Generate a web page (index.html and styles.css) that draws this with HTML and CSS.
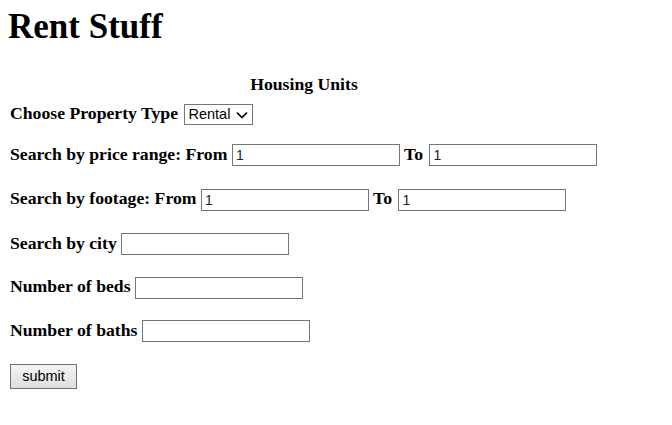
FILE: index.html
```html
<!DOCTYPE html>
<html>
<head>
<meta charset="utf-8">
<title>Rent Stuff</title>
<link rel="stylesheet" href="styles.css">
</head>
<body>
<h1 class="title">Rent Stuff</h1>
<form class="search">
  <div class="caption">Housing Units</div>
  <div class="row row-type">Choose Property Type <span class="select-wrap"><select class="select"><option>Rental</option></select><svg class="chev" width="12" height="8" viewBox="0 0 12 8"><path d="M1 1.5 L6 6.5 L11 1.5" fill="none" stroke="#000" stroke-width="1.6"/></svg></span></div>
  <div class="row row-price">Search by price range: From <input class="field" type="text" value="1"> To <input class="field field-to" type="text" value="1"></div>
  <div class="row row-wide">Search by footage: From <input class="field" type="text" value="1"> To <input class="field field-to" type="text" value="1"></div>
  <div class="row row-wide">Search by city <input class="field" type="text"></div>
  <div class="row">Number of beds <input class="field" type="text"></div>
  <div class="row">Number of baths <input class="field" type="text"></div>
  <div class="row row-submit"><button class="btn" type="button">submit</button></div>
</form>
</body>
</html>
```
FILE: styles.css
```css
html, body {
  background: #fff;
}
body {
  margin: 8px;
  font-family: "Liberation Serif", "Times New Roman", serif;
  color: #000;
}
.title {
  margin: 0;
  font-size: 35px;
  font-weight: bold;
  line-height: 37px;
}
.search {
  width: 588px;
  padding-left: 2px;
  margin-top: 30px;
  display: flex;
  flex-direction: column;
}
.caption {
  text-align: center;
  font-weight: bold;
  font-size: 17.7px;
  line-height: 18px;
  height: 18px;
}
.row {
  font-weight: bold;
  font-size: 17.7px;
  height: 24px;
  line-height: 24px;
  margin-top: 19.5px;
  white-space: nowrap;
}
.row-type {
  margin-top: 7.5px;
}
.row-price {
  margin-top: 17px;
}
.row-wide {
  margin-top: 20.5px;
}
.row-submit {
  margin-top: 22px;
  height: 26px;
}
.field {
  box-sizing: border-box;
  width: 168px;
  height: 22px;
  border: 1px solid #767676;
  padding: 0 3px;
  font-family: "Liberation Sans", Arial, sans-serif;
  font-size: 14px;
  color: #222;
  background: #fff;
  vertical-align: middle;
  margin: 0;
  border-radius: 0;
  outline: none;
}
.field-to {
  margin-left: 2px;
}
.select-wrap {
  position: relative;
  display: inline-block;
  vertical-align: middle;
  height: 21px;
  margin-left: 2px;
}
.select {
  -webkit-appearance: none;
  appearance: none;
  box-sizing: border-box;
  width: 69px;
  height: 21px;
  border: 1px solid #767676;
  border-radius: 0;
  background: #fff;
  padding: 0 0 0 3px;
  font-family: "Liberation Sans", Arial, sans-serif;
  font-size: 14.5px;
  color: #000;
  margin: 0;
  display: block;
}
.chev {
  position: absolute;
  right: 5px;
  top: 7px;
  pointer-events: none;
}
.btn {
  box-sizing: border-box;
  width: 67px;
  height: 25px;
  border: 1px solid #707070;
  border-radius: 0;
  background: linear-gradient(#f4f4f4, #dedede);
  font-family: "Liberation Sans", Arial, sans-serif;
  font-size: 14.5px;
  color: #000;
  padding: 0;
  margin: 0;
  vertical-align: top;
}
```
